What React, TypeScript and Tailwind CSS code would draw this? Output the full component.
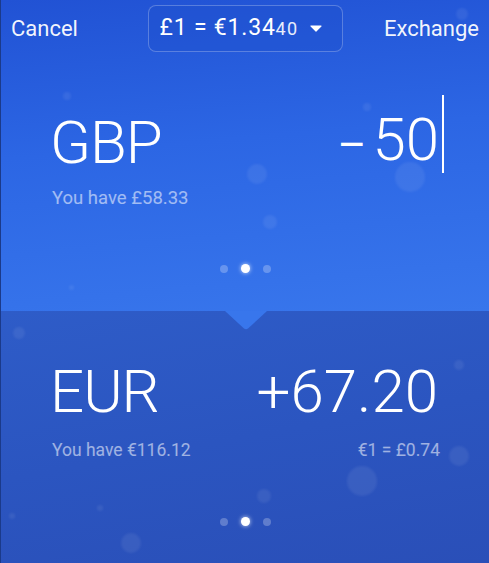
const font = { fontFamily: 'Roboto, "Noto Sans", sans-serif' }

const Dots = () => (
  <div className="flex items-center justify-center gap-[13px]">
    <span className="h-[8px] w-[8px] rounded-full bg-white/25" />
    <span className="h-[9px] w-[9px] rounded-full bg-white shadow-[0_0_4px_rgba(255,255,255,0.8)]" />
    <span className="h-[8px] w-[8px] rounded-full bg-white/25" />
  </div>
)

const Bubble = ({ className }: { className: string }) => (
  <span className={`pointer-events-none absolute rounded-full bg-white/[0.07] blur-[1px] ${className}`} />
)

export default function App() {
  return (
    <div
      className="relative flex h-[563px] w-[489px] flex-col overflow-hidden border-l border-[#1b3a8a] text-white"
      style={font}
    >
      {/* Top: selling currency */}
      <section className="relative flex h-[311px] flex-col bg-[linear-gradient(175deg,#2152d4_0%,#2c66e4_45%,#3876ec_100%)]">
        <Bubble className="left-[62px] top-[92px] h-[8px] w-[8px]" />
        <Bubble className="left-[246px] top-[164px] h-[20px] w-[20px]" />
        <Bubble className="left-[394px] top-[162px] h-[30px] w-[30px]" />
        <Bubble className="left-[362px] top-[103px] h-[8px] w-[8px]" />
        <Bubble className="left-[455px] top-[8px] h-[12px] w-[12px]" />
        <Bubble className="left-[68px] top-[285px] h-[5px] w-[5px]" />
        <Bubble className="left-[262px] top-[215px] h-[14px] w-[14px]" />

        <header className="grid h-[56px] grid-cols-[1fr_auto_1fr] items-center px-[10px]">
          <button className="justify-self-start text-[22px] text-white/95">Cancel</button>
          <button className="flex h-[47px] w-[195px] items-center rounded-[8px] border border-white/25 bg-[#1d50cc]/40 pl-[11px]">
            <span className="flex items-baseline">
              <span className="text-[23px] tracking-[0.8px]">£1 = €1.34</span>
              <span className="text-[18px] tracking-[1.2px] text-white/90">40</span>
            </span>
            <svg className="ml-[12px]" width="12" height="7" viewBox="0 0 12 7">
              <path d="M1 1h10L6 6z" fill="white" strokeLinejoin="round" stroke="white" strokeWidth="1.2" />
            </svg>
          </button>
          <button className="justify-self-end text-[22px] text-white/95">Exchange</button>
        </header>

        <div className="mt-[54px] flex items-center justify-between pl-[49px] pr-[50px]">
          <span className="text-[60px] font-light leading-[60px] tracking-[-1px]">GBP</span>
          <div className="relative flex items-baseline leading-[60px]">
            <span className="mr-[6px] text-[44px]">–</span>
            <span className="text-[60px] font-light">50</span>
            <span className="absolute right-[-5px] top-[-15px] h-[78px] w-[2px] bg-white" />
          </div>
        </div>
        <p className="mt-[11px] pl-[51px] text-[18.5px] leading-[24px] text-white/55">You have £58.33</p>

        <div className="mt-auto pb-[38px]">
          <Dots />
        </div>
      </section>

      {/* Bottom: buying currency */}
      <section className="relative flex flex-1 flex-col bg-[linear-gradient(170deg,#2e5cc8_0%,#2b55c0_50%,#2a4fb8_100%)]">
        <svg className="absolute left-[224px] top-0" width="42" height="19" viewBox="0 0 42 19">
          <path d="M0 0h42L23 17.5q-2 1.5-4 0z" fill="#3876ec" />
        </svg>
        <Bubble className="left-[12px] top-[16px] h-[12px] w-[12px]" />
        <Bubble className="left-[346px] top-[155px] h-[30px] w-[30px]" />
        <Bubble className="left-[453px] top-[49px] h-[10px] w-[10px]" />
        <Bubble className="left-[256px] top-[178px] h-[14px] w-[14px]" />
        <Bubble className="left-[448px] top-[135px] h-[20px] w-[20px]" />
        <Bubble className="left-[120px] top-[222px] h-[20px] w-[20px]" />
        <Bubble className="left-[96px] top-[194px] h-[6px] w-[6px]" />
        <Bubble className="left-[8px] top-[202px] h-[6px] w-[6px]" />

        <div className="mt-[51px] flex items-center justify-between pl-[49px] pr-[51px]">
          <span className="text-[60px] font-light leading-[60px] tracking-[-1px]">EUR</span>
          <span className="text-[60px] font-light leading-[60px]">+67.20</span>
        </div>
        <div className="mt-[16px] flex items-center justify-between pl-[51px] pr-[49px] text-[17.5px] leading-[24px] text-white/55">
          <span>You have €116.12</span>
          <span>€1 = £0.74</span>
        </div>

        <div className="mt-auto pb-[37px]">
          <Dots />
        </div>
      </section>
    </div>
  )
}
